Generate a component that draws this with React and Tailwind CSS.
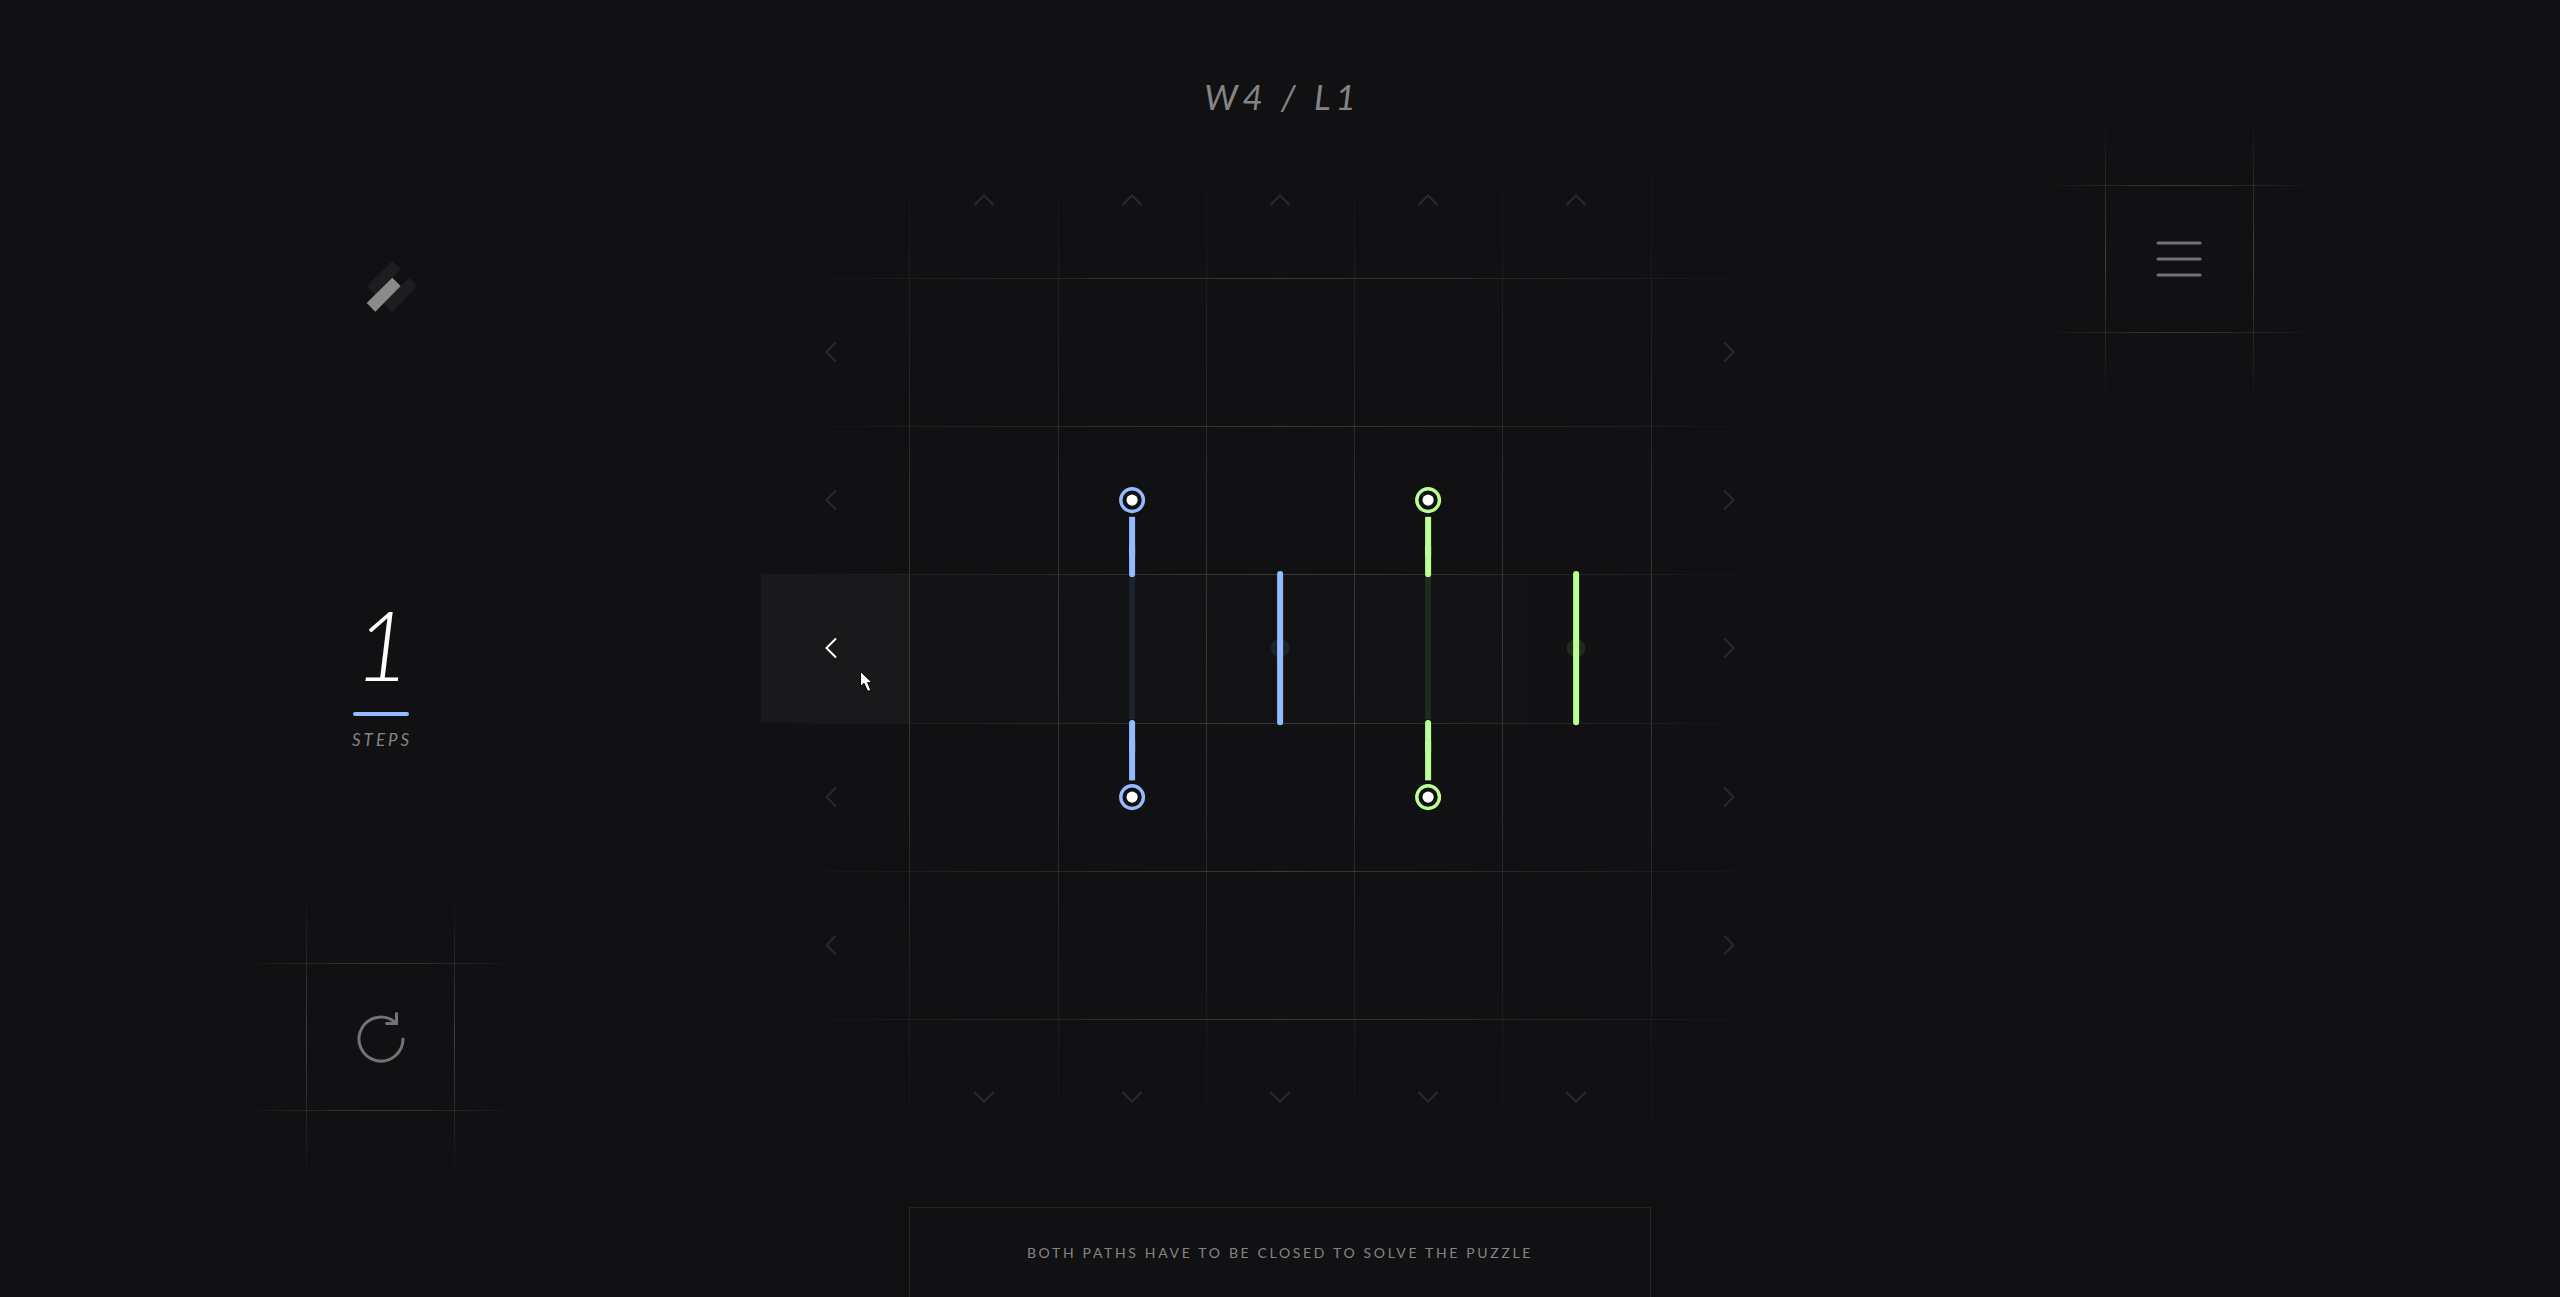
const CELLS = [0, 1, 2, 3, 4, 5, 6];
const COLORS = {
  blue: { line: '#94bbff', ghost: '#1d222b' },
  green: { line: '#b8ff94', ghost: '#222a20' },
};

// Pieces on the board, keyed by "row-column" of the 7 x 7 grid.
const PIECES = {
  '2-2': { kind: 'node', color: 'blue', dir: 'down' },
  '3-2': { kind: 'ghost', color: 'blue' },
  '4-2': { kind: 'node', color: 'blue', dir: 'up' },
  '3-3': { kind: 'bar', color: 'blue' },
  '2-4': { kind: 'node', color: 'green', dir: 'down' },
  '3-4': { kind: 'ghost', color: 'green' },
  '4-4': { kind: 'node', color: 'green', dir: 'up' },
  '3-5': { kind: 'bar', color: 'green' },
};

function Piece({ kind, color, dir }) {
  const { line, ghost } = COLORS[color];
  return (
    <svg viewBox="0 0 148 148" className="relative z-10 size-full overflow-visible" aria-hidden="true">
      {kind === 'ghost' && <path d="M74 3V145" stroke={ghost} strokeWidth="6" />}
      {kind === 'bar' && (
        <>
          <circle cx="74" cy="74" r="9.3" fill={ghost} />
          <path d="M74 0V148" stroke={line} strokeWidth="6" strokeLinecap="round" />
        </>
      )}
      {kind === 'node' && (
        <g transform={dir === 'up' ? 'rotate(180 74 74)' : undefined}>
          <path d="M74 90.7V130" stroke={line} strokeWidth="6" />
          <path d="M74 120V148" stroke={line} strokeWidth="6" strokeLinecap="round" />
          <circle cx="74" cy="74" r="11.3" fill="none" stroke={line} strokeWidth="3.4" />
          <circle cx="74" cy="74" r="5.6" fill="#fff" />
        </g>
      )}
    </svg>
  );
}

const TURN = { left: 'rotate-0', up: 'rotate-90', right: 'rotate-180', down: '-rotate-90' };

function Arrow({ dir, index, active }) {
  return (
    <button
      type="button"
      aria-label={`Shift ${dir === 'left' || dir === 'right' ? 'row' : 'column'} ${index} ${dir}`}
      className={
        active
          ? 'relative flex size-full cursor-pointer items-center justify-center bg-[#19191b] text-white'
          : 'relative flex size-full cursor-pointer items-center justify-center text-[#2a2a2c]'
      }
    >
      <svg viewBox="0 0 22 22" className={`size-[22px] ${TURN[dir]}`} fill="none" stroke="currentColor" strokeWidth="2">
        <path d="M12 1.5L2.5 11L12 20.5" />
      </svg>
      {active && (
        <svg viewBox="0 0 13 21" className="absolute top-[97px] left-[99px] h-[21px] w-[13px]" aria-hidden="true">
          <path d="M.5 .5V15.5L4 12.3L7.5 20H10.3V18L7.6 11.6H12Z" fill="#fff" stroke="#000" strokeWidth="1" />
        </svg>
      )}
    </button>
  );
}

function Cell({ row, col }) {
  const inRow = row > 0 && row < 6;
  const inCol = col > 0 && col < 6;
  if (inRow && col === 0) return <Arrow dir="left" index={row} active={row === 3} />;
  if (inRow && col === 6) return <Arrow dir="right" index={row} />;
  if (inCol && row === 0) return <Arrow dir="up" index={col} />;
  if (inCol && row === 6) return <Arrow dir="down" index={col} />;
  const piece = PIECES[`${row}-${col}`];
  return <div className="min-h-0 min-w-0">{piece && <Piece {...piece} />}</div>;
}

function Board() {
  return (
    <section aria-label="Puzzle board" className="relative size-[80vh]">
      <div className="pointer-events-none absolute inset-0 grid grid-rows-7">
        <div className="row-start-4 bg-linear-to-r from-[#131315] from-60% to-[#111113]" />
      </div>
      <div className="grid size-full grid-cols-7 grid-rows-7">
        {CELLS.map((row) => CELLS.map((col) => <Cell key={`${row}-${col}`} row={row} col={col} />))}
      </div>
      <div className="pointer-events-none absolute inset-0 grid grid-cols-7">
        {CELLS.map((i) => (
          <div
            key={i}
            className="w-px bg-linear-to-b from-transparent via-[#3a3a3b] to-transparent first:invisible"
          />
        ))}
      </div>
      <div className="pointer-events-none absolute inset-0 grid grid-rows-7">
        {CELLS.map((i) => (
          <div
            key={i}
            className="h-px bg-linear-to-r from-transparent from-1% via-[#3a3a3b] to-transparent to-99% first:invisible"
          />
        ))}
      </div>
    </section>
  );
}

function TileButton({ label, children }) {
  return (
    <div className="relative flex size-[calc(160vh/7)] items-center justify-center">
      <div className="pointer-events-none absolute inset-0 flex justify-center">
        <div className="flex w-1/2 justify-between">
          <div className="w-px bg-linear-to-b from-transparent via-[#3e3e3f] to-transparent" />
          <div className="w-px bg-linear-to-b from-transparent via-[#3e3e3f] to-transparent" />
        </div>
      </div>
      <div className="pointer-events-none absolute inset-0 flex flex-col justify-center">
        <div className="flex h-1/2 flex-col justify-between">
          <div className="h-px bg-linear-to-r from-transparent from-2% via-[#3a3a3b] to-transparent to-98%" />
          <div className="h-px bg-linear-to-r from-transparent from-2% via-[#3a3a3b] to-transparent to-98%" />
        </div>
      </div>
      <button
        type="button"
        aria-label={label}
        className="flex size-1/2 cursor-pointer items-center justify-center text-[#727274]"
      >
        {children}
      </button>
    </div>
  );
}

export default function App() {
  return (
    <div className="grid min-h-screen grid-cols-[1fr_auto_1fr] bg-[#111113] font-['Lato',sans-serif] text-[#848485]">
      <aside className="flex flex-col items-center pt-[249px] pb-28">
        <a href="#home" aria-label="Home" className="block">
          <svg viewBox="343 249 76 76" className="size-[76px]">
            <path d="M392.3 261L400.7 269.3L375.3 295L366.7 286.3Z" fill="#1d1d1f" />
            <path d="M409 277.7L417.4 286L392 311.7L383.4 303Z" fill="#1d1d1f" />
            <path d="M392.3 277.7L400.7 286L375.3 311.7L366.7 303Z" fill="#8b8b8c" />
          </svg>
        </a>
        <div className="mt-[271px] mb-auto flex flex-col items-center">
          <p className="pl-1 text-8xl font-light text-white italic">1</p>
          <div className="mt-5 h-1 w-14 rounded-full bg-[#94bbff]" />
          <p className="mt-3 pl-[3px] text-[17px] leading-6 tracking-[3px] italic">STEPS</p>
        </div>
        <TileButton label="Restart level">
          <svg
            viewBox="0 0 60 60"
            className="size-[60px]"
            fill="none"
            stroke="currentColor"
            strokeWidth="3"
            strokeLinecap="round"
          >
            <path d="M52 32A22 22 0 1 1 44.5 15.5" />
            <path d="M45.5 6.5V16.5H35.5" />
          </svg>
        </TileButton>
      </aside>

      <main className="flex flex-col items-center">
        <header className="h-[10vh] pt-[72px]">
          <h1 className="pl-[5px] text-[35px] leading-[48px] tracking-[5px] italic">W4 / L1</h1>
        </header>
        <Board />
        <p className="mt-10 flex w-[calc(400vh/7)] flex-1 items-center justify-center border border-b-0 border-[#262627] text-sm tracking-[0.19em]">
          BOTH PATHS HAVE TO BE CLOSED TO SOLVE THE PUZZLE
        </p>
      </main>

      <aside className="flex flex-col items-center pt-[111px]">
        <TileButton label="Open menu">
          <svg
            viewBox="0 0 48 48"
            className="size-12"
            fill="none"
            stroke="currentColor"
            strokeWidth="3"
            strokeLinecap="round"
          >
            <path d="M3 8H45M3 24H45M3 40H45" />
          </svg>
        </TileButton>
      </aside>
    </div>
  );
}
